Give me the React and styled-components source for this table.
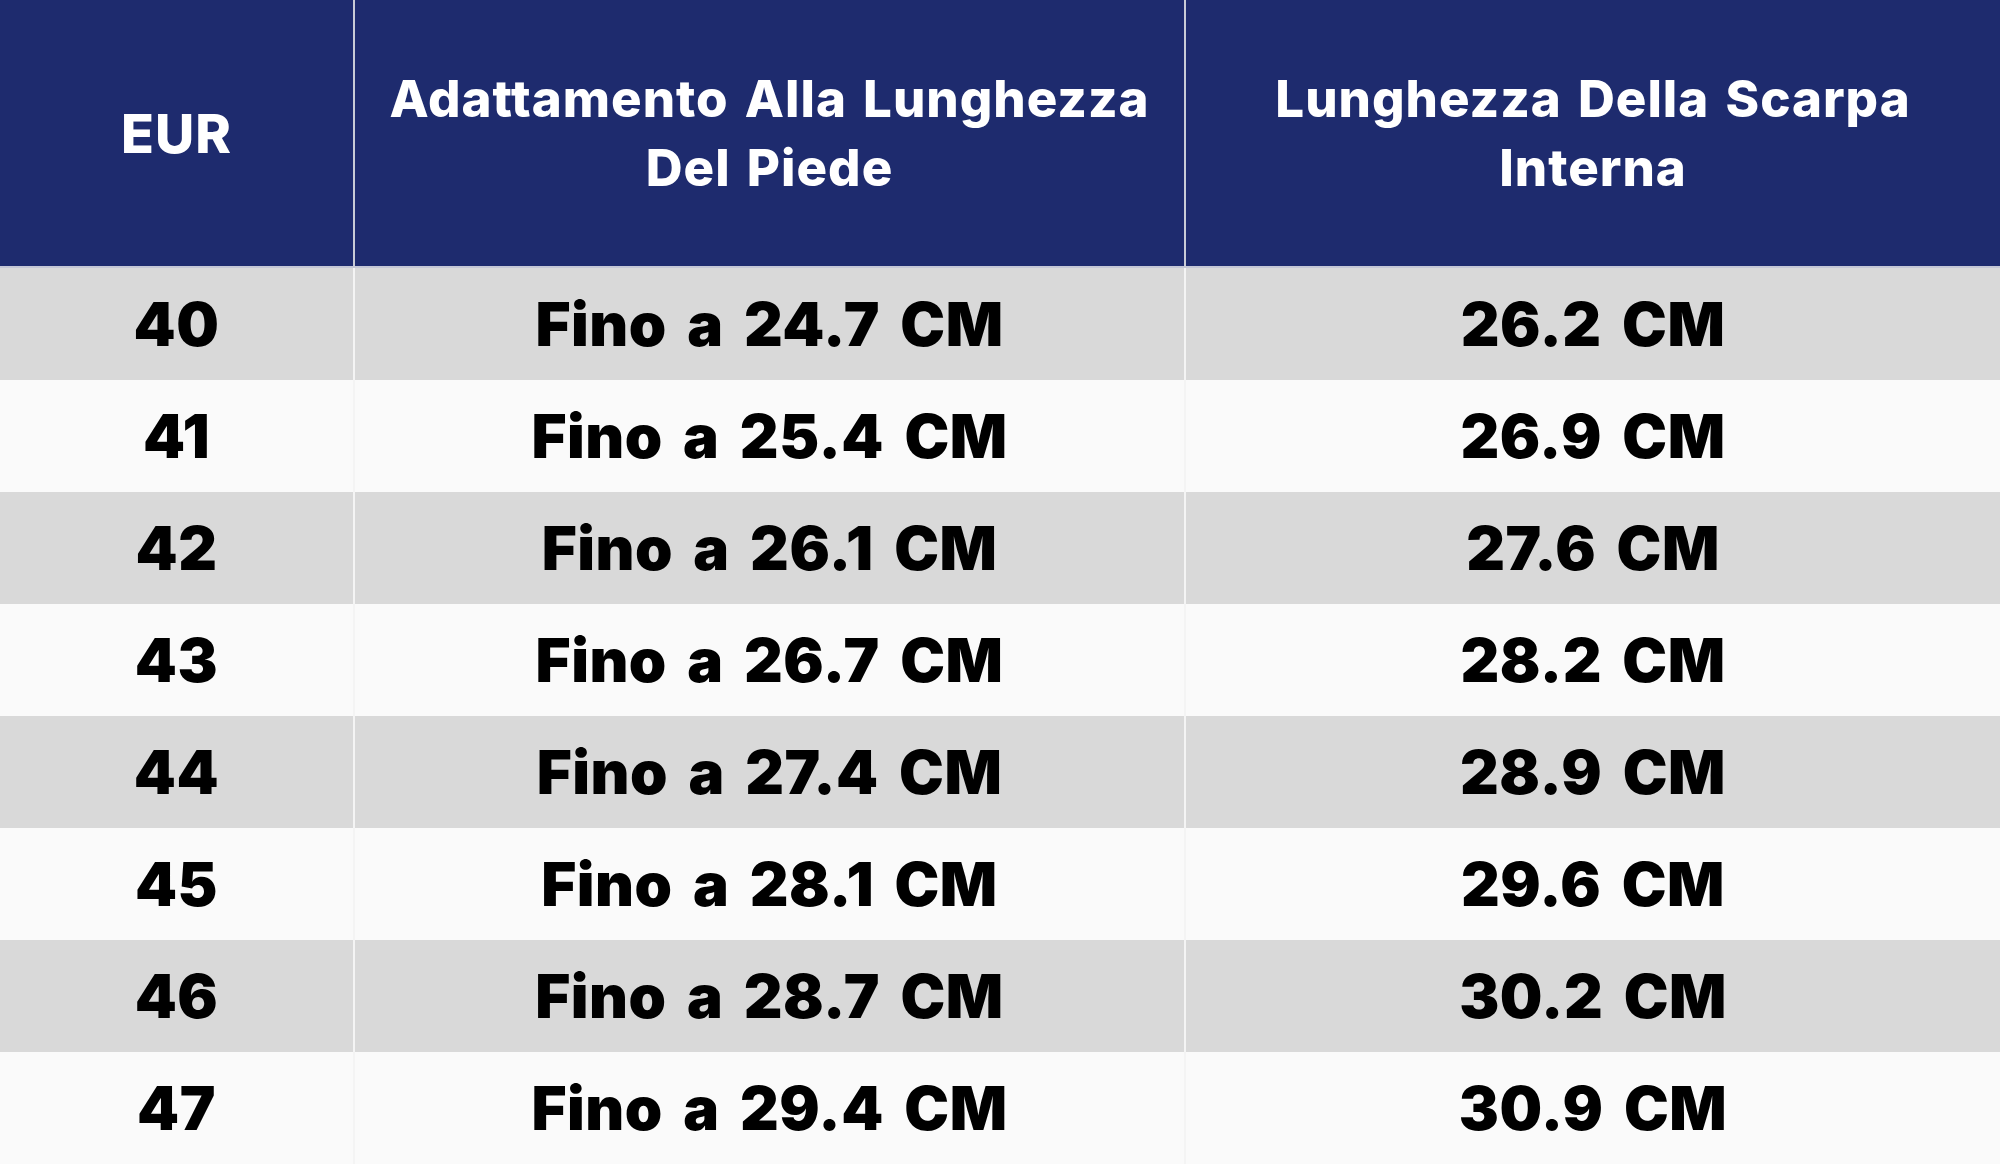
import React from 'react'
import styled, { createGlobalStyle } from 'styled-components'

const GlobalStyle = createGlobalStyle`
    html, body {
        margin: 0;
        padding: 0;
        background: #fafafa;
    }
    body {
        font-family: Inter, "Open Sans", sans-serif;
    }
`

const Table = styled.div`
    display: grid;
    grid-template-columns: 355px 831px 1fr;
    grid-template-rows: 268px repeat(8, 112px);
    width: 2000px;
    height: 1164px;
    overflow: hidden;
`

const HeadCell = styled.div`
    background-color: #1e2b6e;
    color: #ffffff;
    display: flex;
    align-items: center;
    justify-content: center;
    text-align: center;
    font-family: Inter, sans-serif;
    font-weight: 800;
    font-size: ${p => (p.$big ? '54px' : '51px')};
    line-height: 69px;
    letter-spacing: 1px;
    word-spacing: 4px;
    padding: 0 10px;
    box-sizing: border-box;
    border-right: ${p => (p.$last ? 'none' : '2px solid #c9cbd6')};
    border-bottom: 2px solid #c4c7d6;
`

const Cell = styled.div`
    background-color: ${p => (p.$shade ? '#d9d9d9' : '#fafafa')};
    color: #000;
    display: flex;
    align-items: center;
    justify-content: center;
    font-family: Inter, sans-serif;
    font-weight: 900;
    font-size: 60px;
    letter-spacing: 0.5px;
    word-spacing: 8px;
    box-sizing: border-box;
    border-right: ${p => (p.$last ? 'none' : '2px solid #f4f4f4')};
`

const rows = [
    ['40', 'Fino a 24.7 CM', '26.2 CM'],
    ['41', 'Fino a 25.4 CM', '26.9 CM'],
    ['42', 'Fino a 26.1 CM', '27.6 CM'],
    ['43', 'Fino a 26.7 CM', '28.2 CM'],
    ['44', 'Fino a 27.4 CM', '28.9 CM'],
    ['45', 'Fino a 28.1 CM', '29.6 CM'],
    ['46', 'Fino a 28.7 CM', '30.2 CM'],
    ['47', 'Fino a 29.4 CM', '30.9 CM'],
]

const App = () => {
    return (
        <>
            <GlobalStyle />
            <Table>
                <HeadCell $big>EUR</HeadCell>
                <HeadCell>Adattamento Alla Lunghezza<br />Del Piede</HeadCell>
                <HeadCell $last>Lunghezza Della Scarpa<br />Interna</HeadCell>
                {rows.map((r, i) => (
                    <React.Fragment key={r[0]}>
                        <Cell $shade={i % 2 === 0}>{r[0]}</Cell>
                        <Cell $shade={i % 2 === 0}>{r[1]}</Cell>
                        <Cell $shade={i % 2 === 0} $last>{r[2]}</Cell>
                    </React.Fragment>
                ))}
            </Table>
        </>
    )
}

export default App
